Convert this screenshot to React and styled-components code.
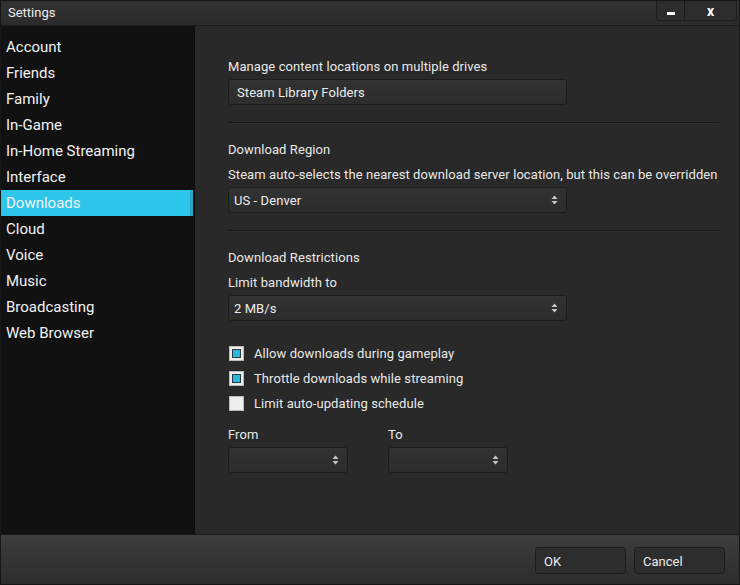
import styled, { createGlobalStyle } from 'styled-components';

const GlobalStyle = createGlobalStyle`
  html, body {
    margin: 0;
    padding: 0;
    background: #1a1a1a;
  }
  body {
    font-family: Roboto, "Liberation Sans", Arial, sans-serif;
  }
`;

const Window = styled.div`
  width: 740px;
  height: 585px;
  box-sizing: border-box;
  border: 1px solid #161616;
  display: flex;
  flex-direction: column;
  background: #292929;
  color: #e6e6e6;
  overflow: hidden;
`;

const TitleBar = styled.div`
  height: 24px;
  flex: none;
  display: flex;
  align-items: flex-start;
  justify-content: space-between;
  background: linear-gradient(#323232, #2b2b2b);
  border-bottom: 1px solid #1b1b1b;
`;

const Title = styled.div`
  font-size: 13px;
  line-height: 24px;
  padding-left: 7px;
  color: #ececec;
`;

const WinButtons = styled.div`
  display: flex;
  height: 19px;
  margin-right: 2px;
  border: 1px solid #1c1c1c;
  border-top: none;
  border-radius: 0 0 4px 4px;
  background: #2d2d2d;
  overflow: hidden;
`;

const WinButton = styled.div`
  width: ${(p) => p.$w}px;
  display: flex;
  align-items: center;
  justify-content: center;
  color: #fff;
  font-weight: bold;
  font-size: 14px;
  & + & {
    border-left: 1px solid #1c1c1c;
  }
`;

const MinBar = styled.span`
  display: block;
  width: 8px;
  height: 3px;
  margin-top: 5px;
  background: #fff;
`;

const Body = styled.div`
  flex: 1;
  display: flex;
  min-height: 0;
`;

const Sidebar = styled.div`
  width: 194px;
  flex: none;
  background: #111111;
  border-right: 1px solid #0c0c0c;
  padding-top: 8px;
  box-sizing: border-box;
`;

const NavItem = styled.div`
  height: 26px;
  line-height: 26px;
  font-size: 15px;
  padding-left: 5px;
  margin-right: 1px;
  color: #f2f2f2;
  background: ${(p) => (p.$active ? '#2ec5ea' : 'transparent')};
  box-shadow: ${(p) => (p.$active ? 'inset -3px 0 0 #27a6c6' : 'none')};
`;

const Content = styled.div`
  flex: 1;
  padding: 33px 32px 0 33px;
  font-size: 13px;
  letter-spacing: 0.08px;
`;

const Label = styled.div`
  line-height: 16px;
  white-space: nowrap;
  margin-top: ${(p) => p.$mt || 0}px;
  color: #e8e8e8;
`;

const Field = styled.div`
  width: ${(p) => p.$w || 339}px;
  height: 26px;
  box-sizing: border-box;
  margin-top: 4px;
  display: flex;
  align-items: center;
  justify-content: space-between;
  padding: 0 8px 0 ${(p) => p.$pl || 5}px;
  border: 1px solid #1d1d1d;
  border-radius: 3px;
  background: linear-gradient(#323232, #2c2c2c);
  color: #ececec;
  font-size: 13px;
`;

const Divider = styled.div`
  height: 0;
  border-top: 1px solid #1a1a1a;
  border-bottom: 1px solid #2f2f2f;
  margin-top: ${(p) => p.$mt}px;
`;

const CheckList = styled.div`
  margin-top: 20px;
`;

const CheckRow = styled.div`
  height: 25px;
  display: flex;
  align-items: center;
  padding-left: 1px;
  gap: 10px;
  color: #e8e8e8;
`;

const Box = styled.span`
  width: 15px;
  height: 15px;
  box-sizing: border-box;
  background: #eeeeee;
  border: 1px solid #b9b9b9;
  display: flex;
  align-items: center;
  justify-content: center;
  &::after {
    content: '';
    display: ${(p) => (p.$checked ? 'block' : 'none')};
    width: 9px;
    height: 9px;
    box-sizing: border-box;
    background: #2bb6dd;
    border: 1px solid #2a3a40;
  }
`;

const Pair = styled.div`
  display: flex;
  gap: 40px;
  margin-top: 11px;
`;

const Footer = styled.div`
  height: 50px;
  flex: none;
  border-top: 1px solid #1a1a1a;
  background: linear-gradient(#3d3d3d, #2d2d2d);
  display: flex;
  justify-content: flex-end;
  align-items: flex-start;
  padding: 12px 14px 0 0;
  gap: 8px;
  box-sizing: border-box;
`;

const Button = styled.div`
  width: 91px;
  height: 27px;
  box-sizing: border-box;
  border: 1px solid #1c1c1c;
  border-radius: 3px;
  background: #2d2d2d;
  color: #ececec;
  font-size: 13px;
  line-height: 27px;
  padding-left: 8px;
`;

function Arrows() {
  return (
    <svg width="7" height="10" viewBox="0 0 7 10">
      <path d="M3.5 0.5 L6.5 4 L0.5 4 Z" fill="#c8c8c8" />
      <path d="M3.5 9.5 L6.5 6 L0.5 6 Z" fill="#c8c8c8" />
    </svg>
  );
}

function Select({ value, width }) {
  return (
    <Field $w={width}>
      <span>{value}</span>
      <Arrows />
    </Field>
  );
}

const navItems = [
  'Account', 'Friends', 'Family', 'In-Game', 'In-Home Streaming', 'Interface',
  'Downloads', 'Cloud', 'Voice', 'Music', 'Broadcasting', 'Web Browser',
];

const checks = [
  { label: 'Allow downloads during gameplay', checked: true },
  { label: 'Throttle downloads while streaming', checked: true },
  { label: 'Limit auto-updating schedule', checked: false },
];

export default function App() {
  return (
    <>
      <GlobalStyle />
      <Window>
        <TitleBar>
          <Title>Settings</Title>
          <WinButtons>
            <WinButton $w={27}><MinBar /></WinButton>
            <WinButton $w={51}>x</WinButton>
          </WinButtons>
        </TitleBar>
        <Body>
          <Sidebar>
            {navItems.map((item) => (
              <NavItem key={item} $active={item === 'Downloads'}>{item}</NavItem>
            ))}
          </Sidebar>
          <Content>
            <Label>Manage content locations on multiple drives</Label>
            <Field $pl={8}>Steam Library Folders</Field>
            <Divider $mt={17} />
            <Label $mt={18}>Download Region</Label>
            <Label $mt={9}>Steam auto-selects the nearest download server location, but this can be overridden</Label>
            <Select value="US - Denver" />
            <Divider $mt={17} />
            <Label $mt={18}>Download Restrictions</Label>
            <Label $mt={9}>Limit bandwidth to</Label>
            <Select value="2 MB/s" />
            <CheckList>
              {checks.map((c) => (
                <CheckRow key={c.label}>
                  <Box $checked={c.checked} />
                  {c.label}
                </CheckRow>
              ))}
            </CheckList>
            <Pair>
              <div>
                <Label>From</Label>
                <Select value="" width={120} />
              </div>
              <div>
                <Label>To</Label>
                <Select value="" width={120} />
              </div>
            </Pair>
          </Content>
        </Body>
        <Footer>
          <Button>OK</Button>
          <Button>Cancel</Button>
        </Footer>
      </Window>
    </>
  );
}
